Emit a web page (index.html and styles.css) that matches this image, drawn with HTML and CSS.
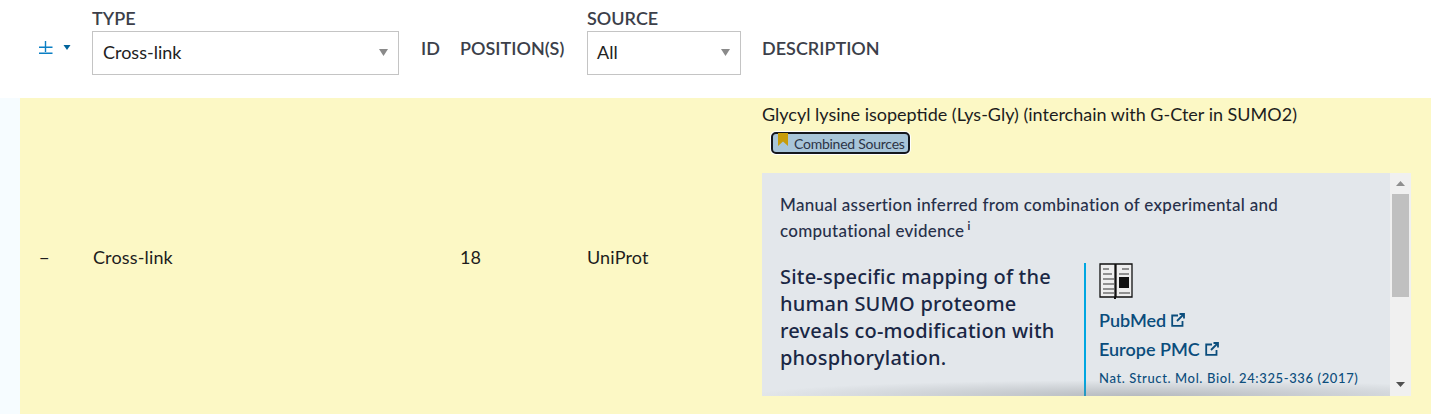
FILE: index.html
```html
<!DOCTYPE html>
<html lang="en">
<head>
<meta charset="utf-8">
<title>Features</title>
<link rel="stylesheet" href="styles.css">
</head>
<body>
<table class="features">
  <colgroup>
    <col class="c-toggle"><col class="c-type"><col class="c-id"><col class="c-pos"><col class="c-source"><col class="c-desc">
  </colgroup>
  <thead>
    <tr>
      <th class="toggle-head">
        <div class="toggle-wrap">
          <svg class="plusminus" width="14" height="14" viewBox="0 0 14 14"><path d="M0 7.300h13.500M6.500 1v11M0 13.300h13.500"/></svg>
          <svg class="caret" width="8" height="5" viewBox="0 0 8 5"><path d="M0.500 0h7L4 5z"/></svg>
        </div>
      </th>
      <th>
        <div class="label">TYPE</div>
        <div class="select select-type"><span>Cross-link</span><svg class="arrow" width="9" height="7" viewBox="0 0 9 7"><path d="M0 0h9L4.500 7z"/></svg></div>
      </th>
      <th class="plain">ID</th>
      <th class="plain">POSITION(S)</th>
      <th>
        <div class="label">SOURCE</div>
        <div class="select select-source"><span>All</span><svg class="arrow" width="9" height="7" viewBox="0 0 9 7"><path d="M0 0h9L4.500 7z"/></svg></div>
      </th>
      <th class="plain">DESCRIPTION</th>
    </tr>
  </thead>
  <tbody>
    <tr class="row">
      <td class="minus">−</td>
      <td class="cell type-cell">Cross-link</td>
      <td></td>
      <td class="cell">18</td>
      <td class="cell">UniProt</td>
      <td class="desc">
        <div class="desc-text">Glycyl lysine isopeptide (Lys-Gly) (interchain with G-Cter in SUMO2)</div>
        <div class="badge-line">
          <span class="badge">
            <svg class="bookmark" width="10" height="13" viewBox="0 0 10 13"><path d="M0 0h10v13L5 8.500 0 13z"/></svg>
            Combined Sources
          </span>
        </div>
        <div class="panel">
          <div class="panel-main">
            <p class="assertion">Manual assertion inferred from combination of experimental and computational evidence<sup>i</sup></p>
            <div class="pub">
              <h4 class="pub-title">Site-specific mapping of the human SUMO proteome reveals co-modification with phosphorylation.</h4>
              <div class="pub-links">
                <svg class="book" width="34" height="36" viewBox="0 0 34 36">
                  <path class="page" d="M1 1h15v33H1zM17 1h16v33H17z"/>
                  <path class="lines" d="M4 6h6M4 11h9M4 16h11M4 21h11M4 26h11M4 30h11M23 6h7M20 11h10M20 30h11"/>
                  <rect x="20" y="14" width="10" height="11"/>
                  <path d="M15 34h2v2h-2z"/>
                </svg>
                <div class="ext"><a>PubMed</a><svg class="ext-icon" width="14" height="14" viewBox="0 0 14 14"><path d="M7 2.500H1.200v10.300h10.300V8M8.500 1h4.500v4.500M13 1L6 8"/></svg></div>
                <div class="ext"><a>Europe PMC</a><svg class="ext-icon" width="14" height="14" viewBox="0 0 14 14"><path d="M7 2.500H1.200v10.300h10.300V8M8.500 1h4.500v4.500M13 1L6 8"/></svg></div>
                <div class="journal">Nat. Struct. Mol. Biol. 24:325-336 (2017)</div>
              </div>
            </div>
            <div class="fade"></div>
          </div>
          <div class="scrollbar">
            <svg class="sb-arrow" width="9" height="5" viewBox="0 0 9 5"><path d="M4.500 0L9 5H0z"/></svg>
            <div class="thumb"></div>
            <div class="track"></div>
            <svg class="sb-arrow down" width="9" height="5" viewBox="0 0 9 5"><path d="M0 0h9L4.500 5z"/></svg>
          </div>
        </div>
      </td>
    </tr>
  </tbody>
</table>
</body>
</html>
```
FILE: styles.css
```css
html, body {
  margin: 0;
  height: 414px;
  overflow: hidden;
  background: #fff;
}
body {
  font-family: Lato, "Open Sans", sans-serif;
  font-size: 18px;
  color: #1d1d1d;
  box-sizing: border-box;
  padding-left: 20px;
  background: linear-gradient(#fff 98px, #f6fcff 98px);
}
.features {
  border-collapse: collapse;
  table-layout: fixed;
  width: 1411px;
}
.c-toggle { width: 72px; }
.c-type { width: 329px; }
.c-id { width: 39px; }
.c-pos { width: 127px; }
.c-source { width: 175px; }
.c-desc { width: 669px; }
th {
  box-sizing: border-box;
  height: 98px;
  padding: 0;
  text-align: left;
  font-weight: 600;
  font-size: 18px;
  color: #3c3f4a;
  vertical-align: top;
  background: #fff;
}
th.plain {
  vertical-align: middle;
  padding-bottom: 2px;
  line-height: 20px;
}
.toggle-head {
  vertical-align: middle;
  padding-left: 19px;
  padding-bottom: 4px;
}
.toggle-wrap {
  display: flex;
  align-items: flex-start;
  gap: 10px;
}
.plusminus {
  fill: none;
  stroke: #0a7fc4;
  stroke-width: 1.4;
  flex: none;
}
.caret {
  fill: #00639b;
  margin-top: 5px;
  flex: none;
}
.label {
  margin-top: 8px;
  height: 23px;
  line-height: 20px;
}
.select {
  box-sizing: border-box;
  height: 44px;
  border: 1px solid #c4c4c4;
  background: #fff;
  padding: 0 10px 3px;
  display: flex;
  align-items: center;
  justify-content: space-between;
  font-weight: 400;
  font-size: 18px;
  color: #222;
}
.select-type { width: 307px; }
.select-source {
  width: 154px;
  padding-left: 9px;
}
.arrow {
  fill: #8a8a8a;
  margin-top: 2px;
}
.row td {
  box-sizing: border-box;
  background: #fcf8c5;
  height: 316px;
  padding: 1px 0 0;
  vertical-align: middle;
  color: #1d1d1d;
}
.row td.cell {
  letter-spacing: 0.15px;
}
.row td.type-cell {
  padding-left: 1px;
}
.row td.minus {
  padding-left: 19px;
}
.row td.desc {
  vertical-align: top;
  padding-top: 5px;
}
.desc-text {
  line-height: 22px;
}
.badge-line {
  display: flex;
  padding-left: 9px;
  margin-top: 7px;
  height: 22px;
}
.badge {
  box-sizing: border-box;
  display: flex;
  align-items: center;
  width: 139px;
  height: 22px;
  border: 2px solid #15171c;
  border-radius: 5px;
  background: #a8c5d9;
  box-shadow: 0 0 0 1px #fff;
  font-size: 14px;
  letter-spacing: -0.25px;
  color: #2c3446;
  padding-left: 5px;
  white-space: nowrap;
}
.bookmark {
  fill: #c79c0a;
  margin: -7px 6px 0 0;
  flex: none;
}
.panel {
  display: flex;
  width: 649px;
  height: 223px;
  margin-top: 19px;
  background: #e3e7eb;
}
.panel-main {
  position: relative;
  flex: 1;
  min-width: 0;
  overflow: hidden;
  padding: 19px 18px 0;
  color: #1b2a4a;
}
.assertion {
  margin: 0;
  font-size: 17px;
  font-weight: 500;
  line-height: 26px;
  letter-spacing: 0.27px;
  color: #27304a;
  width: 520px;
}
.assertion sup {
  font-size: 11px;
  line-height: 0;
  font-weight: 700;
  margin-left: 3px;
  vertical-align: 7px;
}
.pub {
  display: flex;
  margin-top: 19px;
}
.pub-title {
  margin: 0;
  width: 304px;
  font-family: "Noto Sans", sans-serif;
  font-size: 20px;
  font-weight: 500;
  letter-spacing: 0.2px;
  line-height: 27px;
  color: #1a2745;
}
.pub-links {
  border-left: 2px solid #00a7e1;
  padding-left: 13px;
  height: 145px;
  flex: 1;
  color: #0b4d7c;
}
.book {
  display: block;
  fill: #111;
}
.book .page {
  fill: #eeeeee;
  stroke: #111;
  stroke-width: 1.3;
}
.book .lines {
  fill: none;
  stroke: #333;
  stroke-width: 1;
}
.ext {
  display: flex;
  align-items: center;
  height: 29px;
  font-size: 18px;
  font-weight: 600;
  color: #0b4d7c;
}
.book + .ext {
  margin-top: 6px;
}
.ext-icon {
  margin-left: 5px;
  fill: none;
  stroke: #0b4d7c;
  stroke-width: 1.8;
}
.journal {
  margin-top: 6px;
  font-size: 13px;
  letter-spacing: 0.62px;
  font-weight: 500;
  line-height: 18px;
  color: #0b4d7c;
  white-space: nowrap;
}
.fade {
  position: absolute;
  left: 0;
  right: 0;
  bottom: 0;
  height: 16px;
  background: radial-gradient(ellipse 62% 16px at 60% 100%, rgba(120, 125, 130, 0.42), rgba(120, 125, 130, 0) 100%);
}
.scrollbar {
  width: 21px;
  flex: none;
  background: #f0f0f0;
  display: flex;
  flex-direction: column;
  align-items: center;
  padding-top: 8px;
  box-sizing: border-box;
}
.sb-arrow {
  fill: #8f8f8f;
  flex: none;
}
.sb-arrow.down {
  fill: #505050;
  margin-bottom: 9px;
}
.thumb {
  width: 17px;
  height: 103px;
  background: #c0c0c0;
  margin-top: 8px;
  flex: none;
}
.track {
  flex: 1;
}
```
